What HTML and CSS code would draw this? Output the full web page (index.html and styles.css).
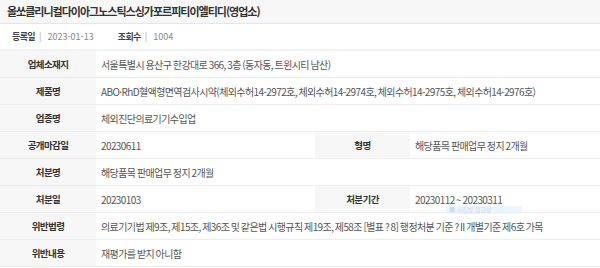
FILE: index.html
```html
<!DOCTYPE html>
<html lang="ko">

<head>
    <meta charset="UTF-8">
    <title>행정처분 상세</title>
    <link rel="stylesheet" href="styles.css">
</head>

<body>
    <!-- 업체명 -->
    <div class="title">올쏘클리니컬다이아그노스틱스싱가포르피티이엘티디(영업소)</div>

    <!-- 등록일 / 조회수 -->
    <div class="meta">
        <span class="meta-item"><b>등록일</b><i>|</i>2023-01-13</span>
        <span class="meta-item"><b>조회수</b><i>|</i>1004</span>
    </div>

    <!-- 상세 정보 -->
    <table class="detail">
        <colgroup>
            <col class="c-label">
            <col class="c-value">
            <col class="c-label2">
            <col>
        </colgroup>
        <tr>
            <th>업체소재지</th>
            <td colspan="3">서울특별시 용산구 한강대로 366, 3층 (동자동, 트윈시티 남산)</td>
        </tr>
        <tr>
            <th>제품명</th>
            <td colspan="3">ABO·RhD혈액형면역검사시약(체외수허14-2972호, 체외수허14-2974호, 체외수허14-2975호, 체외수허14-2976호)</td>
        </tr>
        <tr>
            <th>업종명</th>
            <td colspan="3">체외진단의료기기수입업</td>
        </tr>
        <tr>
            <th>공개마감일</th>
            <td>20230611</td>
            <th>형명</th>
            <td>해당품목 판매업무 정지 2개월</td>
        </tr>
        <tr>
            <th>처분명</th>
            <td colspan="3">해당품목 판매업무 정지 2개월</td>
        </tr>
        <tr>
            <th>처분일</th>
            <td>20230103</td>
            <th>처분기간</th>
            <td class="period">20230112 ~ 20230311<span class="hint">■ 사진방 접근성</span></td>
        </tr>
        <tr>
            <th>위반법령</th>
            <td colspan="3">의료기기법 제9조, 제15조, 제36조 및 같은법 시행규칙 제19조, 제58조 [별표 ? 8] 행정처분 기준 ? II 개별기준 제6호 가목</td>
        </tr>
        <tr>
            <th>위반내용</th>
            <td colspan="3">재평가를 받지 아니함</td>
        </tr>
    </table>
</body>

</html>
```

FILE: styles.css
```css
html,
body {
    margin: 0;
    background: #fff;
    font-family: "Noto Sans CJK KR", "Noto Sans", sans-serif;
    color: #555;
}

.title {
    height: 23px;
    line-height: 23px;
    padding-left: 7px;
    background: #f7f7f7;
    border-bottom: 1px solid #e6e6e6;
    font-size: 11px;
    font-weight: bold;
    letter-spacing: -1px;
    color: #333;
}

.meta {
    display: flex;
    align-items: center;
    gap: 24px;
    height: 25px;
    padding-left: 12px;
    border-bottom: 2px solid #f2f2f2;
    font-size: 9px;
    color: #888;
}

.meta-item b {
    color: #444;
    letter-spacing: -0.6px;
}

.meta-item i {
    font-style: normal;
    color: #aaa;
    margin: 0 6px 0 4px;
}

.detail {
    width: 100%;
    border-collapse: collapse;
    table-layout: fixed;
    font-size: 10px;
    letter-spacing: -0.6px;
}

.c-label {
    width: 96px;
}

.c-value {
    width: 219px;
}

.c-label2 {
    width: 95px;
}

.detail th,
.detail td {
    height: 26px;
    padding: 0;
    border-bottom: 1px solid #ececec;
    white-space: nowrap;
    overflow: visible;
}

.detail th {
    background: #f7f7f7;
    color: #333;
    font-size: 9.5px;
    font-weight: bold;
    text-align: center;
}

.detail td {
    padding-left: 5px;
    text-align: left;
    word-spacing: -0.7px;
}

.period {
    position: relative;
}

/* 떠 있는 안내 라벨 */
.hint {
    position: absolute;
    left: 36px;
    top: 20px;
    width: 76px;
    height: 8px;
    line-height: 8px;
    padding-left: 3px;
    box-sizing: border-box;
    background: #eaf2fc;
    color: #c5d3e6;
    font-size: 6px;
    letter-spacing: 0;
    word-spacing: 0;
    opacity: 0.8;
}
```
